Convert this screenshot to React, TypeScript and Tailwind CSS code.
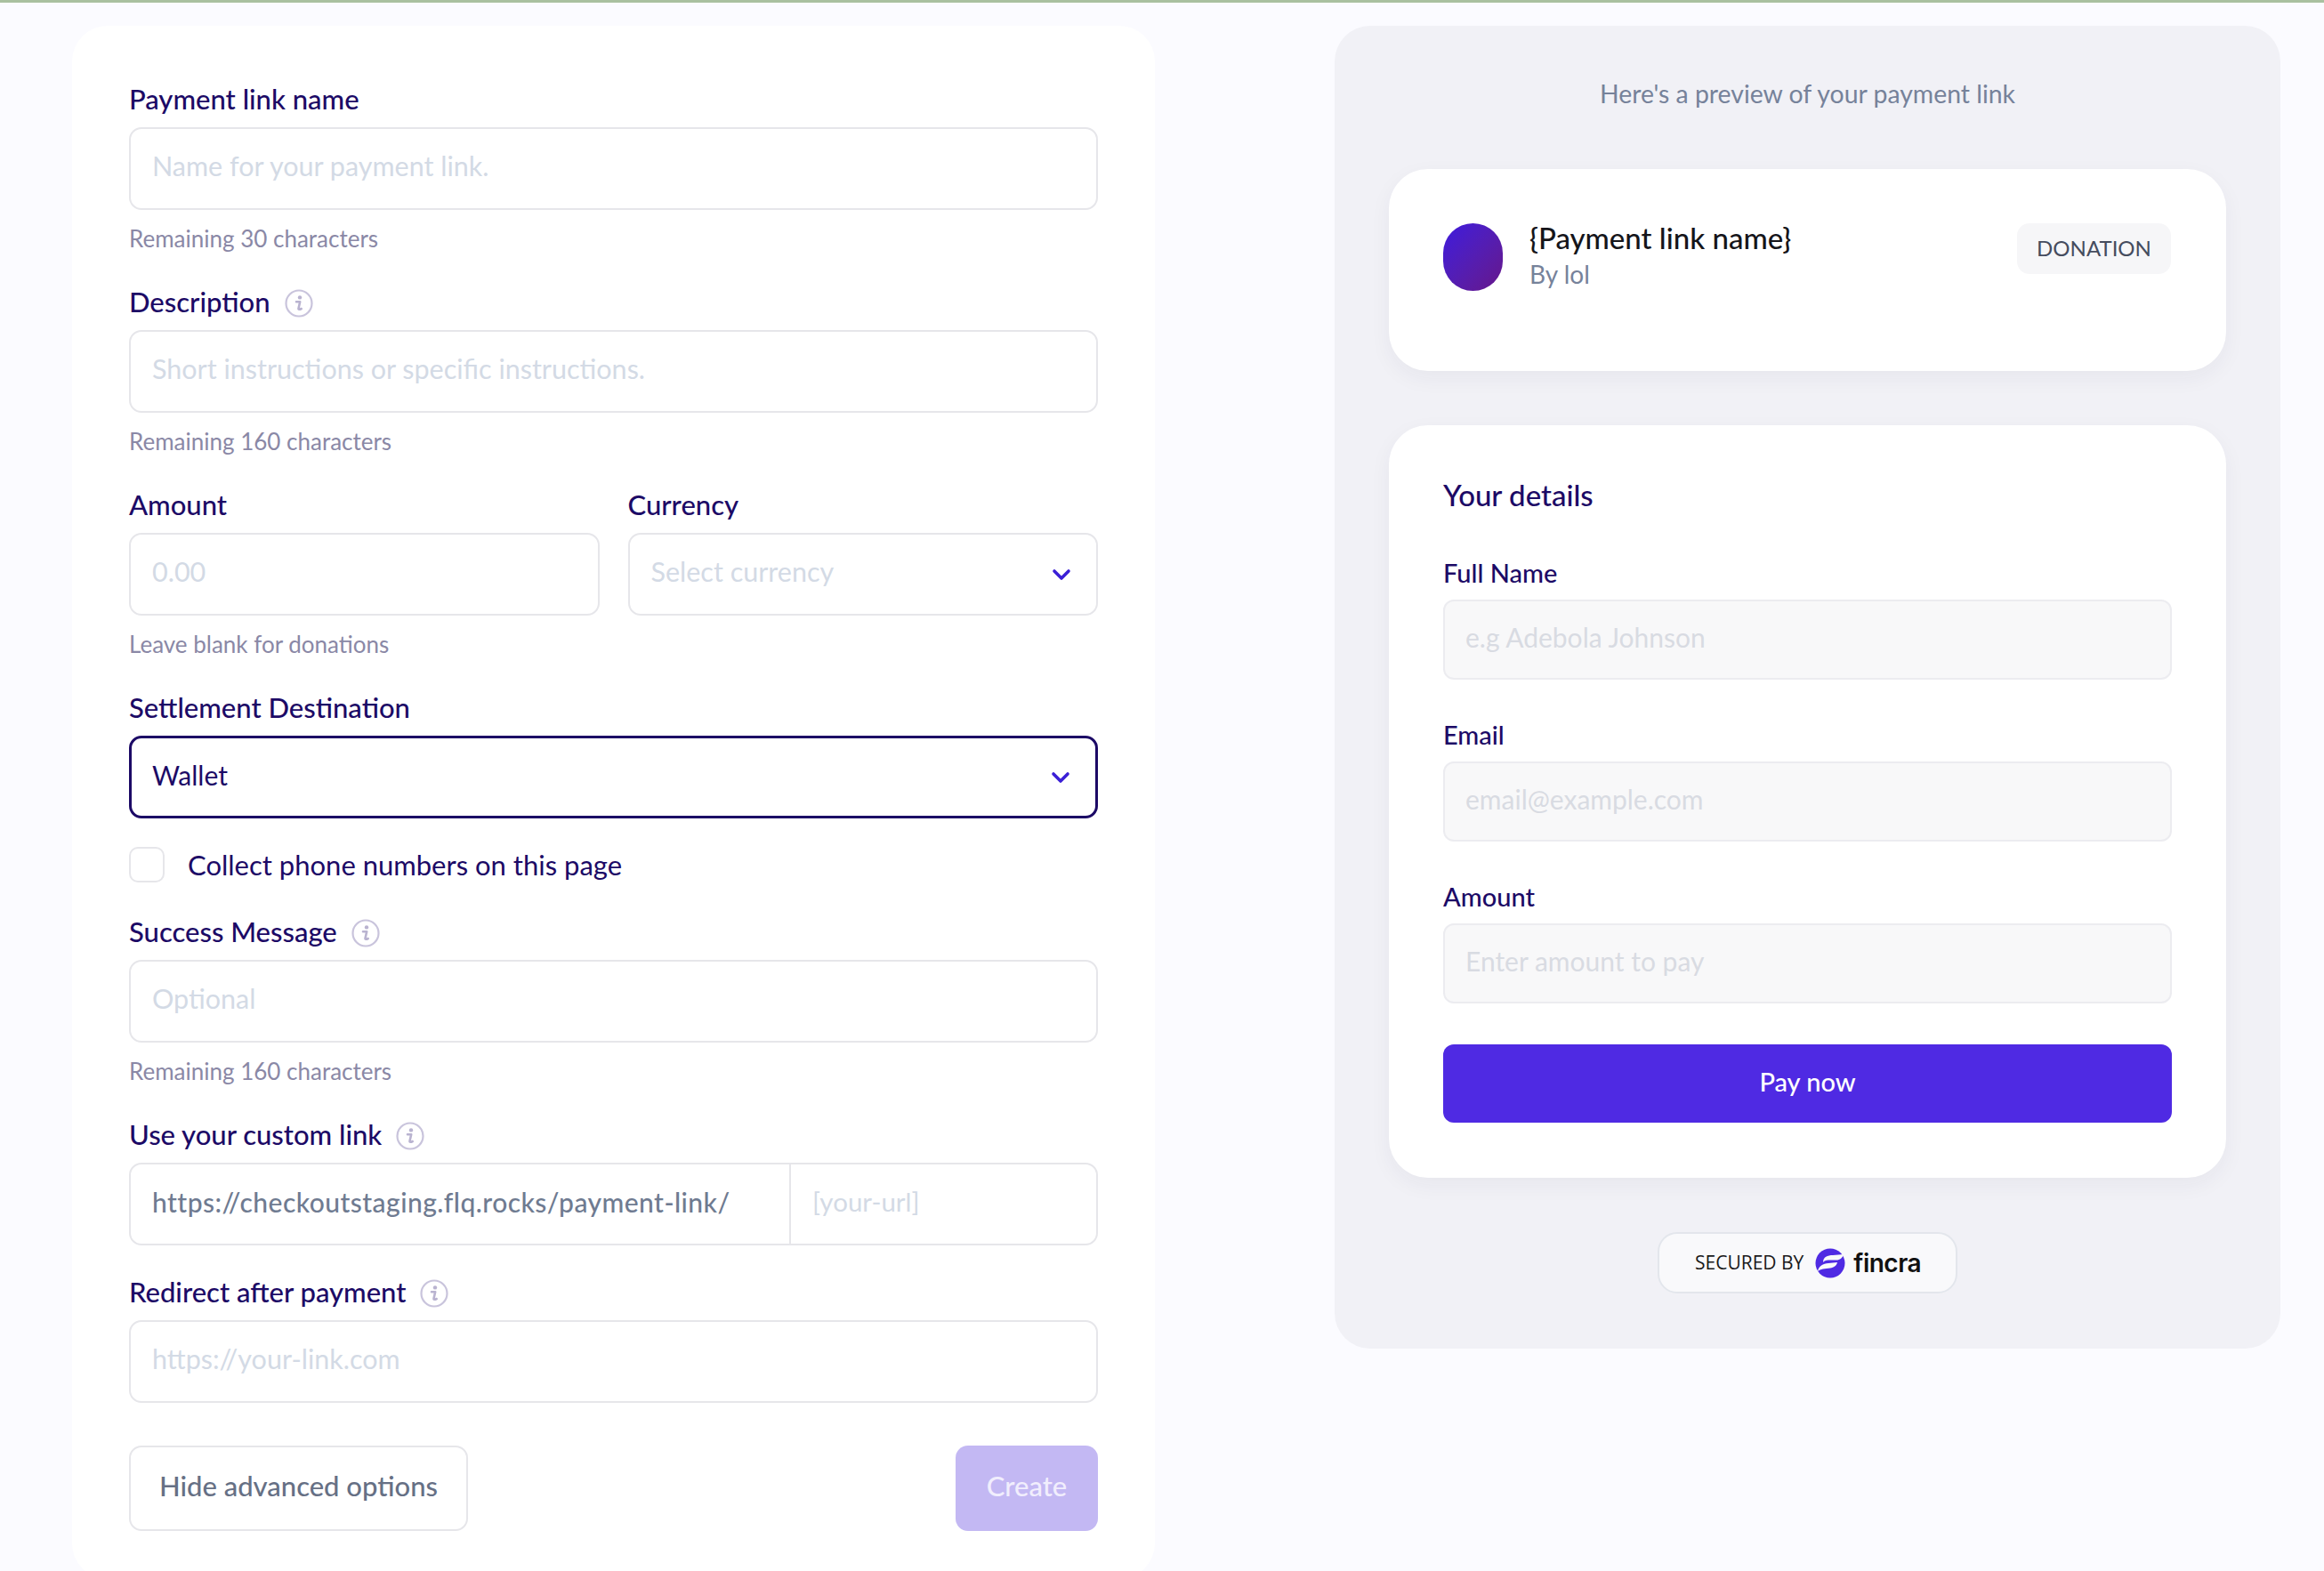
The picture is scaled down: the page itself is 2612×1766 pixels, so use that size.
import React from 'react';
import { ChevronDown } from 'lucide-react';

const InfoIcon = () => (
  <svg width="32" height="32" viewBox="0 0 32 32" fill="none" className="ml-4 mt-1">
    <circle cx="16" cy="16" r="14.5" stroke="#c9c4dc" strokeWidth="2.2" />
    <circle cx="17" cy="9.4" r="2.2" fill="#b9b3d0" />
    <path d="M13 14.2h4.200l-1.700 7.600c-.2 1 1 1.400 3.200.2" stroke="#b9b3d0" strokeWidth="2.600" strokeLinecap="round" strokeLinejoin="round" />
  </svg>
);

const Chevron = () => <ChevronDown className="w-8 h-8 -mr-px text-[#3b1fd6]" strokeWidth={2.7} />;

const Label = ({ text, info }: { text: string; info?: boolean }) => (
  <div className="flex items-center h-10 mb-3">
    <span className="pb-px text-[31px] font-medium leading-10 text-[#1c0a66]">{text}</span>
    {info && <InfoIcon />}
  </div>
);

const Box = ({ text, chevron }: { text: string; chevron?: boolean }) => (
  <div className="flex items-center justify-between h-[93px] px-6 bg-white rounded-[14px] border-2 border-[#e6e6ea]">
    <span className="pb-[5px] text-[30.500px] text-[#d3dae5]">{text}</span>
    {chevron && <Chevron />}
  </div>
);

const Helper = ({ text }: { text: string }) => (
  <p className="mt-4 h-8 text-[26px] leading-8 text-[#8a88a6]">{text}</p>
);

const Field = ({ label, placeholder, helper, info }: { label: string; placeholder: string; helper: string; info?: boolean }) => (
  <div className="mb-[35px]">
    <Label text={label} info={info} />
    <Box text={placeholder} />
    <Helper text={helper} />
  </div>
);

const PreviewField = ({ label, placeholder }: { label: string; placeholder: string }) => (
  <div className="mb-[46px]">
    <div className="h-8 mb-[14px] text-[29px] font-medium leading-8 text-[#1c0a66]">{label}</div>
    <div className="flex items-center h-[90px] pb-[5px] px-[23px] bg-[#f8f8f9] rounded-[12px] border-2 border-[#ececf0] text-[30px] text-[#d8dbe2]">
      {placeholder}
    </div>
  </div>
);

export default function App() {
  return (
    <div className="h-[1766px] overflow-hidden bg-[#fbfbff] border-t-[3px] border-[#a9c0a0] flex items-start font-['Lato',sans-serif]">
      {/* Form */}
      <div className="w-[1217px] ml-[81px] mt-[26px] px-[64px] pt-[62px] pb-[54px] bg-white rounded-[40px]">
        <Field label="Payment link name" placeholder="Name for your payment link." helper="Remaining 30 characters" />
        <Field label="Description" info placeholder="Short instructions or specific instructions." helper="Remaining 160 characters" />

        <div className="mb-[35px]">
          <div className="flex gap-8">
            <div className="flex-1">
              <Label text="Amount" />
              <Box text="0.00" />
            </div>
            <div className="flex-1">
              <Label text="Currency" />
              <Box text="Select currency" chevron />
            </div>
          </div>
          <Helper text="Leave blank for donations" />
        </div>

        <Label text="Settlement Destination" />
        <div className="flex items-center justify-between h-[93px] pl-[23px] pr-6 bg-white rounded-[14px] border-[3px] border-[#1c0a66]">
          <span className="pb-[5px] text-[30px] text-[#1c0a66]">Wallet</span>
          <Chevron />
        </div>

        <div className="flex items-center gap-[26px] mt-8 mb-[35px] h-10">
          <div className="w-10 h-10 rounded-[10px] border-2 border-[#e6e6ea]" />
          <span className="text-[31px] text-[#1c0a66]">Collect phone numbers on this page</span>
        </div>

        <Field label="Success Message" info placeholder="Optional" helper="Remaining 160 characters" />

        <Label text="Use your custom link" info />
        <div className="flex h-[93px] bg-white rounded-[14px] border-2 border-[#e6e6ea]">
          <div className="flex items-center w-[742px] pb-[5px] px-6 border-r-2 border-[#e6e6ea] text-[30px] font-medium tracking-[0.45px] text-[#6f7b91]">
            https://checkoutstaging.flq.rocks/payment-link/
          </div>
          <div className="flex items-center pb-[5px] px-6 text-[29.500px] text-[#d3dae5]">[your-url]</div>
        </div>

        <div className="mt-8">
          <Label text="Redirect after payment" info />
          <Box text="https://your-link.com" />
        </div>

        <div className="flex justify-between mt-[48px]">
          <button className="h-[96px] w-[381px] pb-[6px] rounded-[14px] border-2 border-[#e6e6ea] bg-white text-[31px] font-medium text-[#667085]">
            Hide advanced options
          </button>
          <button className="h-[96px] w-[160px] pb-[6px] rounded-[14px] bg-[#c3b8f3] text-[31px] font-medium text-[#f1eefd]">
            Create
          </button>
        </div>
      </div>

      {/* Preview */}
      <div className="w-[1063px] ml-[202px] mt-[26px] h-[1487px] px-[61px] pt-[58px] bg-[#f1f1f6] rounded-[40px]">
        <p className="h-9 text-center text-[28.400px] leading-9 text-[#76829a]">Here's a preview of your payment link</p>

        <div className="flex items-start h-[227px] mt-[67px] pl-[61px] pr-[62px] pt-[61px] bg-white rounded-[44px] shadow-[0_8px_24px_rgba(30,30,70,0.05)]">
          <div className="w-[67px] h-[76px] rounded-full bg-gradient-to-br from-[#3d17de] to-[#66138a]" />
          <div className="ml-[30px] flex-1">
            <div className="h-9 -mt-[2px] mb-[1px] text-[33px] font-medium leading-9 text-[#15151a]">{'{Payment link name}'}</div>
            <div className="mt-[5px] h-9 text-[28px] leading-9 text-[#76829a]">By lol</div>
          </div>
          <div className="flex items-center justify-center w-[173px] h-[57px] pb-px rounded-[14px] bg-[#f6f6f8] text-[24px] text-[#454c5e]">
            DONATION
          </div>
        </div>

        <div className="h-[846px] mt-[61px] px-[61px] pt-[58px] bg-white rounded-[44px] shadow-[0_8px_24px_rgba(30,30,70,0.05)]">
          <h3 className="h-10 mb-[52px] pb-px text-[33px] font-medium leading-10 text-[#1c0a66]">Your details</h3>
          <PreviewField label="Full Name" placeholder="e.g Adebola Johnson" />
          <PreviewField label="Email" placeholder="email@example.com" />
          <PreviewField label="Amount" placeholder="Enter amount to pay" />
          <button className="w-full h-[88px] pb-[5px] rounded-[12px] bg-[#4f2ae3] text-[29px] font-medium text-white">Pay now</button>
        </div>

        <div className="flex items-center w-[337px] h-[69px] mx-auto mt-[61px] pl-[40px] bg-[#f9f9fb] rounded-[22px] border-2 border-[#e3e6ec]">
          <span className="text-[21px] font-['Open_Sans',sans-serif] text-[#1a1a1a]">SECURED BY</span>
          <svg width="34" height="34" viewBox="0 0 34 34" className="ml-[13px]">
            <circle cx="17" cy="17" r="16.5" fill="#4f2ae3" />
            <path d="M9 16C9 10 14 8 20 8L32 7C31 11 28 13.500 24 13.500L15 13.500C12 13.500 10 14.500 9 16z" fill="#f9f9fb" />
            <path d="M3 26C4 20 9 17.500 15 17L25 16C24 20 21 22 17 22.500C11 23 6 23.500 3 26z" fill="#f9f9fb" />
          </svg>
          <span className="ml-[9px] text-[28px] font-semibold tracking-[-0.5px] font-['Inter',sans-serif] leading-none text-[#111]">fincra</span>
        </div>
      </div>
    </div>
  );
}
